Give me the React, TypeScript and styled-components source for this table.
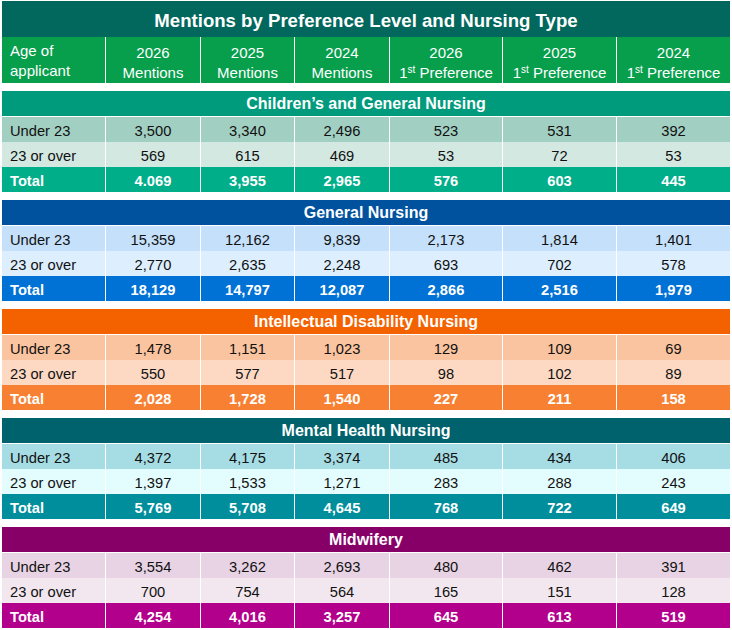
import React from "react";
import styled, { createGlobalStyle } from "styled-components";

const GlobalStyle = createGlobalStyle`
  body {
    margin: 1px 2px;
    background: #ffffff;
    font-family: "Liberation Sans", Arial, sans-serif;
  }
`;

interface Palette {
  head: string;
  row1: string;
  row2: string;
  total: string;
}

interface Section {
  title: string;
  palette: Palette;
  under: string[];
  over: string[];
  total: string[];
}

const sections: Section[] = [
  {
    title: "Children’s and General Nursing",
    palette: { head: "#009a7c", row1: "#a1cfc2", row2: "#d2e8e1", total: "#00ae8a" },
    under: ["3,500", "3,340", "2,496", "523", "531", "392"],
    over: ["569", "615", "469", "53", "72", "53"],
    total: ["4.069", "3,955", "2,965", "576", "603", "445"],
  },
  {
    title: "General Nursing",
    palette: { head: "#00529f", row1: "#c4e0fb", row2: "#ddeffe", total: "#0071d5" },
    under: ["15,359", "12,162", "9,839", "2,173", "1,814", "1,401"],
    over: ["2,770", "2,635", "2,248", "693", "702", "578"],
    total: ["18,129", "14,797", "12,087", "2,866", "2,516", "1,979"],
  },
  {
    title: "Intellectual Disability Nursing",
    palette: { head: "#f46200", row1: "#fbc4a0", row2: "#fdd9c4", total: "#f88032" },
    under: ["1,478", "1,151", "1,023", "129", "109", "69"],
    over: ["550", "577", "517", "98", "102", "89"],
    total: ["2,028", "1,728", "1,540", "227", "211", "158"],
  },
  {
    title: "Mental Health Nursing",
    palette: { head: "#00626d", row1: "#a6dde4", row2: "#e3fcfd", total: "#008e9c" },
    under: ["4,372", "4,175", "3,374", "485", "434", "406"],
    over: ["1,397", "1,533", "1,271", "283", "288", "243"],
    total: ["5,769", "5,708", "4,645", "768", "722", "649"],
  },
  {
    title: "Midwifery",
    palette: { head: "#870067", row1: "#e7d3e3", row2: "#f2e7ef", total: "#b3008c" },
    under: ["3,554", "3,262", "2,693", "480", "462", "391"],
    over: ["700", "754", "564", "165", "151", "128"],
    total: ["4,254", "4,016", "3,257", "645", "613", "519"],
  },
];

const headers: { year: string; pref: boolean }[] = [
  { year: "2026", pref: false },
  { year: "2025", pref: false },
  { year: "2024", pref: false },
  { year: "2026", pref: true },
  { year: "2025", pref: true },
  { year: "2024", pref: true },
];

const App = () => {
  return (
    <S.Wrapper>
      <GlobalStyle />
      <S.Title>Mentions by Preference Level and Nursing Type</S.Title>
      <S.Row $height={46}>
        <S.HeadCell $align="left">
          Age of
          <br />
          applicant
        </S.HeadCell>
        {headers.map((h, i) => (
          <S.HeadCell key={i} $align="center">
            {h.year}
            <br />
            {h.pref ? (
              <>
                1<S.Sup>st</S.Sup> Preference
              </>
            ) : (
              "Mentions"
            )}
          </S.HeadCell>
        ))}
      </S.Row>
      {sections.map((s) => (
        <S.Block key={s.title}>
          <S.SectionTitle $bg={s.palette.head}>{s.title}</S.SectionTitle>
          <S.Row $height={25}>
            <S.Cell $bg={s.palette.row1} $align="left">Under 23</S.Cell>
            {s.under.map((v, i) => (
              <S.Cell key={i} $bg={s.palette.row1} $align="center">{v}</S.Cell>
            ))}
          </S.Row>
          <S.Row $height={25}>
            <S.Cell $bg={s.palette.row2} $align="left">23 or over</S.Cell>
            {s.over.map((v, i) => (
              <S.Cell key={i} $bg={s.palette.row2} $align="center">{v}</S.Cell>
            ))}
          </S.Row>
          <S.Row $height={25}>
            <S.TotalCell $bg={s.palette.total} $align="left">Total</S.TotalCell>
            {s.total.map((v, i) => (
              <S.TotalCell key={i} $bg={s.palette.total} $align="center">{v}</S.TotalCell>
            ))}
          </S.Row>
        </S.Block>
      ))}
    </S.Wrapper>
  );
};

export default App;

const S = {
  Wrapper: styled.div`
    width: 728px;
    display: flex;
    flex-direction: column;
  `,
  Title: styled.div`
    height: 36px;
    background: #02675c;
    color: #ffffff;
    font-size: 18.6px;
    font-weight: 700;
    display: flex;
    align-items: center;
    justify-content: center;
    padding-top: 3px;
    box-sizing: border-box;
  `,
  Row: styled.div<{ $height: number }>`
    display: grid;
    grid-template-columns: 103px 94px 93px 94px 112px 113px 113px;
    column-gap: 1px;
    height: ${(p) => p.$height}px;
    background: #ffffff;
  `,
  HeadCell: styled.div<{ $align: "left" | "center" }>`
    background: #079e4c;
    color: #ffffff;
    font-size: 15px;
    line-height: 20px;
    padding: ${(p) => (p.$align === "left" ? "4px 0 0 8px" : "6px 0 0 0")};
    text-align: ${(p) => p.$align};
  `,
  Sup: styled.sup`
    font-size: 10px;
    line-height: 0;
    vertical-align: 5px;
  `,
  Block: styled.div`
    margin-top: 8px;
    display: flex;
    flex-direction: column;
    &:first-of-type {
      margin-top: 9px;
    }
  `,
  SectionTitle: styled.div<{ $bg: string }>`
    height: 25px;
    margin-bottom: 1px;
    background: ${(p) => p.$bg};
    color: #ffffff;
    font-size: 16px;
    font-weight: 700;
    display: flex;
    align-items: center;
    justify-content: center;
  `,
  Cell: styled.div<{ $bg: string; $align: "left" | "center" }>`
    background: ${(p) => p.$bg};
    color: #111111;
    font-size: 14.7px;
    display: flex;
    align-items: center;
    justify-content: ${(p) => (p.$align === "left" ? "flex-start" : "center")};
    padding: ${(p) => (p.$align === "left" ? "2px 0 0 8px" : "2px 0 0 0")};
  `,
  TotalCell: styled.div<{ $bg: string; $align: "left" | "center" }>`
    background: ${(p) => p.$bg};
    color: #ffffff;
    font-size: 14.7px;
    font-weight: 700;
    display: flex;
    align-items: center;
    justify-content: ${(p) => (p.$align === "left" ? "flex-start" : "center")};
    padding: ${(p) => (p.$align === "left" ? "2px 0 0 8px" : "2px 0 0 0")};
  `,
};
